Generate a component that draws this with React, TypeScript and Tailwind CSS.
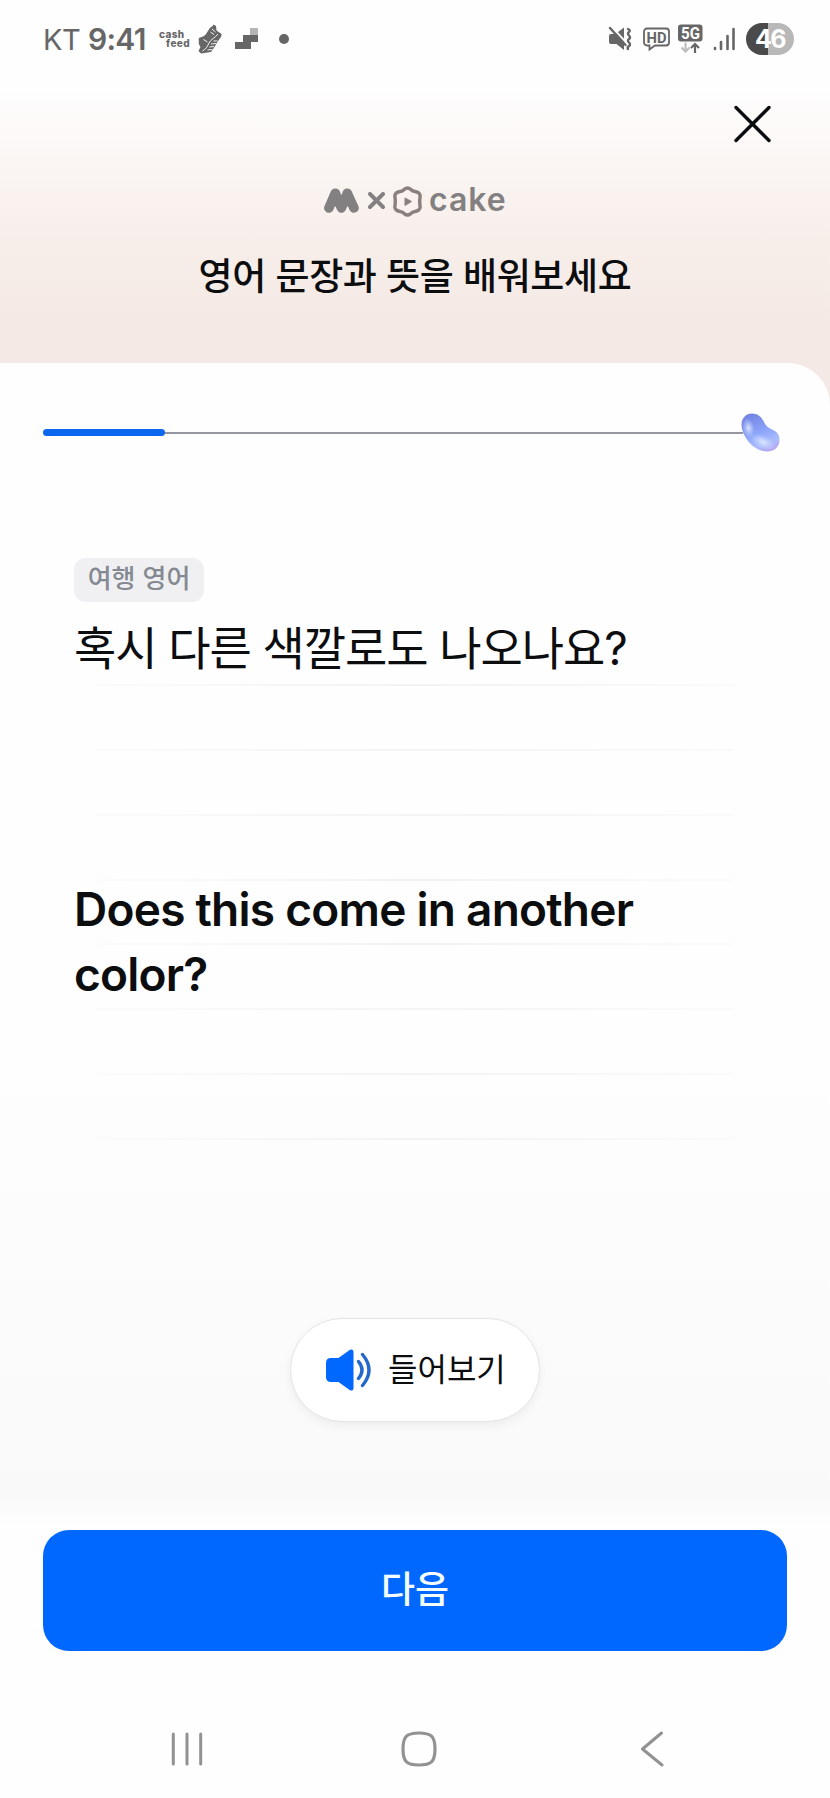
import { ReactNode } from "react";

const ruledLines = [685, 750, 815, 880, 944, 1009, 1074, 1139];

const StatusBar = () => {
  return (
    <div className="flex h-[78px] items-center pl-[43px] pr-9 text-[#666]">
      <span className="w-[45px] whitespace-nowrap text-[29px] leading-none tracking-[-0.5px]">KT</span>
      <span className="w-[71px] whitespace-nowrap text-[30px] font-semibold leading-none tracking-[-0.7px]">9:41</span>
      <div className="flex w-[31px] flex-col text-[10px] font-extrabold leading-[9px] tracking-[0.4px]">
        <span className="block h-[9px]">cash</span>
        <span className="block h-[9px] self-end">feed</span>
      </div>
      <svg className="ml-2 shrink-0" width="24" height="30" viewBox="0 0 24 30">
        <path d="M11 5.500C12 3 14 3.500 15.500 0.500L18 2L18.500 6.500L23.500 10C24 13 21 15 19.500 18L15.500 24.500L13 28L3 29.500L0.500 27L2.500 23L0.800 20V14L5 12.500C8 11.500 9 8 11 5.500Z" fill="#666" />
        <path d="M14 5l3.500 3M12.500 8l3.500 2.500M5.500 15.500l4 2.500M20 10C17 14 13 15 11 19S8 25 4.500 27M15.500 17h4M13 20l5.500-0.500M11.500 23l4.500-0.500M9.500 26l5-0.500" stroke="#f4f4f4" strokeWidth="1" fill="none" />
      </svg>
      <svg className="ml-[13px] shrink-0" width="24" height="22" viewBox="0 0 24 22">
        <path d="M15 0h8v8h-8z" fill="#b5b5b5" />
        <path d="M0 14h8V7h15v7h-7v7H0z" fill="#666" />
      </svg>
      <span className="ml-5 h-[10px] w-[10px] rounded-full bg-[#666]" />

      <div className="ml-auto flex items-center">
        <svg width="24" height="26" viewBox="0 0 24 26">
          <path d="M3 8h4.500L16 1.500v22.500L8.500 18H3q-2 0-2-2v-6q0-2 2-2z" fill="#666" />
          <path d="M3 0l16 17.500" stroke="#fdfdfd" strokeWidth="2" />
          <path d="M2 2l15.500 17" stroke="#666" strokeWidth="2.400" strokeLinecap="round" />
          <path d="M20 3q3 1.500 1 3t0 3.500t0 3.500t0 3.500t0 3.500t-1 3" stroke="#666" strokeWidth="2.400" fill="none" strokeLinecap="round" />
        </svg>
        <svg className="ml-[11px]" width="27" height="26" viewBox="0 0 27 26">
          <path d="M4 2.500h19a3 3 0 0 1 3 3v11a3 3 0 0 1-3 3H12L6.500 23.500v-4H4a3 3 0 0 1-3-3v-11a3 3 0 0 1 3-3z" fill="none" stroke="#666" strokeWidth="1.800" />
          <text x="13.500" y="16.500" textAnchor="middle" fontSize="15.500" fontWeight="700" fill="#666" textLength="20" lengthAdjust="spacingAndGlyphs" fontFamily="Roboto, sans-serif">HD</text>
        </svg>
        <svg className="ml-2" width="25" height="30" viewBox="0 0 25 30">
          <rect y="0.500" width="24.500" height="17" rx="3" fill="#666" />
          <text x="12.500" y="15" textAnchor="middle" fontSize="16.500" fontWeight="700" fill="#fff" textLength="19" lengthAdjust="spacingAndGlyphs" fontFamily="Roboto, sans-serif">5G</text>
          <path d="M7.500 18.500v9M3.500 23.500l4 4 4-4" stroke="#bbb" strokeWidth="2" fill="none" />
          <path d="M17 29v-9M13 24l4-4 4 4" stroke="#666" strokeWidth="2.200" fill="none" />
        </svg>
        <svg className="ml-2.5" width="23" height="26" viewBox="0 0 23 26" stroke="#666" strokeWidth="2.600" strokeLinecap="round">
          <path d="M2 22v1M8 16v7M14.500 10v13M20.500 3v20" />
        </svg>
        <div className="ml-2.5 flex h-8 w-12 items-center justify-center rounded-full bg-linear-to-r from-[#4a4a4a] from-45% to-[#b8b8b8] to-45% text-[25px] font-bold leading-none tracking-[-1.5px] text-white">
          46
        </div>
      </div>
    </div>
  );
};

const PartnerLogo = () => {
  return (
    <div className="flex h-[31px] items-center pl-[324px] text-[#828080]">
      <svg className="mb-[2px]" width="35" height="25" viewBox="0 0 35 25" fill="currentColor" stroke="currentColor" strokeLinecap="round" strokeLinejoin="round">
        <path d="M4.900 20L11.300 5.200L17.400 20L23.300 5.200L30 20" fill="none" strokeWidth="9.600" />
        <path d="M10 7h15l3.500 12.500-4.500-1.500-6.500 5-6.500-5-4.500 1.500z" stroke="none" />
      </svg>
      <svg className="mb-[2px] ml-[9px]" width="17" height="17" viewBox="0 0 17 17" stroke="currentColor" strokeWidth="3.900" strokeLinecap="round">
        <path d="M2 2l13 13M15 2L2 15" />
      </svg>
      <svg className="ml-2" width="29" height="31" viewBox="0 0 29 31">
        <path
          d="M11.500 3.200Q14.500 0.800 17.500 3.200Q19.500 5.200 22 5.500Q26.800 6.300 27.200 10Q26.200 15.500 27.200 21Q26.800 24.700 22 25.500Q19.500 25.800 17.500 27.800Q14.500 30.200 11.500 27.800Q9.500 25.800 7 25.500Q2.200 24.700 1.800 21Q2.800 15.500 1.800 10Q2.200 6.300 7 5.500Q9.500 5.200 11.500 3.200Z"
          fill="none"
          stroke="#8b8080"
          strokeWidth="3.400"
        />
        <path d="M12 12l6.500 3.500L12 19.500z" fill="#8b8080" stroke="#8b8080" strokeLinejoin="round" />
      </svg>
      <span className="mb-1 ml-[7px] text-[32px] font-semibold leading-none tracking-[1px]">cake</span>
    </div>
  );
};

const Bean = () => {
  return (
    <svg className="-ml-0.5 shrink-0" width="39" height="39" viewBox="0 0 39 39">
      <defs>
        <linearGradient id="bean" x1="0.3" y1="0" x2="0.7" y2="1">
          <stop offset="0" stopColor="#7384e4" />
          <stop offset="0.500" stopColor="#8ea6fb" />
          <stop offset="0.800" stopColor="#aabdfc" />
          <stop offset="1" stopColor="#b6a4f2" />
        </linearGradient>
        <radialGradient id="shine">
          <stop offset="0" stopColor="#e3edff" stopOpacity="0.9" />
          <stop offset="1" stopColor="#c5d8ff" stopOpacity="0" />
        </radialGradient>
      </defs>
      <path d="M0.500 12C0.500 5 5 0.500 11 0.500C17 0.500 20.500 4 23 9C25 13.500 28 15 32 17C36.500 19 38.500 22 38.500 27C38.500 34 33 38.500 26 38.500C19 38.500 12 34.500 7 28C3 22.500 0.500 17 0.500 12Z" fill="url(#bean)" />
      <ellipse cx="7.500" cy="15" rx="6" ry="10" fill="url(#shine)" transform="rotate(-10 7.500 15)" />
      <ellipse cx="22" cy="29" rx="14" ry="7" fill="url(#shine)" transform="rotate(25 22 29)" />
    </svg>
  );
};

const NavButton = (props: { label: string; children: ReactNode }) => {
  return (
    <button aria-label={props.label} className="flex h-10 w-10 items-center justify-center text-[#929292]">
      {props.children}
    </button>
  );
};

const App = () => {
  return (
    <div className="flex h-[1798px] w-[830px] flex-col overflow-hidden bg-[#fefefe] font-['Inter','Noto_Sans_CJK_KR',sans-serif] text-[#0c0d0f]">
      <div className="bg-linear-to-b from-[#fefefe] from-[85px] via-[#f7eeea] via-[240px] to-[#f4e9e5] to-[320px]">
        <header className="flex h-[363px] flex-col">
          <StatusBar />
          <div className="flex h-[108px] justify-end pr-[58px] pt-[26px]">
            <button aria-label="닫기" className="h-10 w-10">
              <svg width="40" height="40" viewBox="0 0 40 40" stroke="#0c0d0f" strokeWidth="3.400" strokeLinecap="round">
                <path d="M4 3.500l33 33M37 3.500l-33 33" />
              </svg>
            </button>
          </div>
          <PartnerLogo />
          <h1 className="mt-[33px] text-center text-[37px] font-medium leading-[54px] tracking-[-0.35px]">영어 문장과 뜻을 배워보세요</h1>
        </header>

        <main className="flex h-[1167px] flex-col rounded-tr-[42px] bg-linear-to-b from-[#fefefe] from-[660px] via-[#f9f9f9] via-[1135px] to-[#fefefe] to-[1162px]">
          <div className="mt-[50px] flex h-[39px] items-center pl-[43px]">
            <div className="h-[7px] w-[122px] rounded-full bg-[#0b68ee]" />
            <div className="h-0.5 w-[578px] bg-[#9496a0]" />
            <Bean />
          </div>

          <section className="relative mt-[106px] h-[760px] pl-[74px]">
            {/* faint notebook rules behind the sentences */}
            {ruledLines.map((y) => (
              <div
                key={y}
                className="absolute left-24 h-0.5 w-[638px] bg-linear-to-r from-[#fbfbfb] via-[#f3f3f3] to-[#fafafa]"
                style={{ top: y - 559 }}
              />
            ))}
            <div className="relative flex flex-col">
              <span className="flex h-11 w-[130px] items-center justify-center rounded-[12px] bg-[#f0f0f3] text-[26px] font-medium leading-none text-[#858991]">
                <span className="-mt-0.5">여행 영어</span>
              </span>
              <p className="mt-[13px] text-[46px] leading-[66px] tracking-[-1.1px]">혹시 다른 색깔로도 나오나요?</p>
              <p className="mt-[196px] w-[600px] text-[46px] font-semibold leading-[65px] tracking-[-0.75px]">
                Does this come in another color?
              </p>
            </div>
          </section>

          <button className="flex h-[104px] w-[250px] items-center self-center rounded-full border-[1.5px] border-[#e4e4e5] bg-white pl-[35px] shadow-[0_4px_10px_rgba(0,0,0,0.05)]">
            <svg width="46" height="42" viewBox="0 0 46 42" fill="none">
              <path d="M5 9h7.500L24 0.800Q27.500-0.500 27.500 3v36Q27.500 42.500 24 41.200L12.500 33H5q-5 0-5-5V14q0-5 5-5z" fill="#0068ff" />
              <path d="M32.500 12.500q7 8.500 0 17M36.500 5.500q13 15.500 0 31" stroke="#2468cb" strokeWidth="3.400" strokeLinecap="round" />
            </svg>
            <span className="ml-4 text-[32px] leading-none">들어보기</span>
          </button>
        </main>
      </div>

      <button className="mx-[43px] h-[121px] shrink-0 rounded-[26px] bg-[#0068ff] pb-0.5 text-[37px] font-medium leading-none text-[#f4fdff]">
        다음
      </button>

      <nav className="mt-[78px] flex h-10 shrink-0 pl-[167px]">
        <NavButton label="최근 앱">
          <svg width="32" height="34" viewBox="0 0 32 34" stroke="currentColor" strokeWidth="3" strokeLinecap="round">
            <path d="M2.300 2v30M16 2v30M29.700 2v30" />
          </svg>
        </NavButton>
        <div className="ml-[192px]">
          <NavButton label="홈">
            <svg width="36" height="36" viewBox="0 0 36 36" fill="none" stroke="currentColor" strokeWidth="3.200">
              <path d="M18 2C30 2 34 5 34 18S30 34 18 34S2 31 2 18S6 2 18 2Z" />
            </svg>
          </NavButton>
        </div>
        <div className="ml-[193px]">
          <NavButton label="뒤로">
            <svg width="24" height="36" viewBox="0 0 24 36" fill="none" stroke="currentColor" strokeWidth="3" strokeLinecap="round" strokeLinejoin="round">
              <path d="M21.500 2L2.500 18L22 34" />
            </svg>
          </NavButton>
        </div>
      </nav>
    </div>
  );
};

export default App;
